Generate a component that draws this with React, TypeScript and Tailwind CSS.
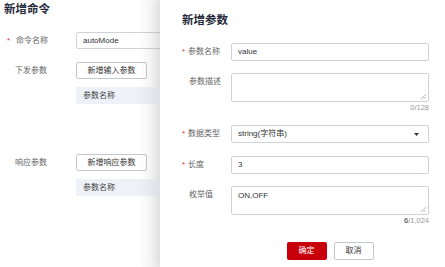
const font = { fontFamily: '"Liberation Sans", "Noto Sans CJK SC", sans-serif' };

function Resize() {
  return (
    <svg className="absolute right-[2px] bottom-[2px]" width="6" height="6" viewBox="0 0 6 6">
      <path d="M1 6 L6 1 M3.5 6 L6 3.5" stroke="#a8a8a8" strokeWidth="0.7" />
    </svg>
  );
}

function Label({ text, required }: { text: string; required?: boolean }) {
  return (
    <div className="flex w-[49px] shrink-0 items-center text-[8px] text-[#666]">
      {required ? <span className="w-[6px] shrink-0 text-[#e5333a]">*</span> : <span className="w-[7px]" />}
      <span>{text}</span>
    </div>
  );
}

function LeftRow({ label, required, children }: { label: string; required?: boolean; children: React.ReactNode }) {
  return (
    <div className="flex items-start">
      <div className="flex h-[17px] w-[69px] shrink-0 items-center text-[8px] text-[#666]">
        {required ? <span className="w-[9px] text-[#e5333a]">*</span> : <span className="w-[8px]" />}
        <span>{label}</span>
      </div>
      <div className="flex-1 min-w-0">{children}</div>
    </div>
  );
}

export default function App() {
  return (
    <div className="flex h-[267px] w-[445px] overflow-hidden bg-white" style={font}>
      <div className="relative w-[160px] shrink-0 overflow-hidden pt-[2px]">
        <h1 className="pl-[4px] text-[11.5px] font-bold leading-[15px] text-[#252b3a]">新增命令</h1>
        <div className="mt-[15px] pl-[7px]">
          <LeftRow label="命令名称" required>
            <div className="flex h-[17px] w-[120px] items-center rounded-[2px] border border-[#cfd2d9] pl-[6px] text-[8px] text-[#333]">
              autoMode
            </div>
          </LeftRow>
          <div className="mt-[13px]">
            <LeftRow label="下发参数">
              <div className="flex h-[17px] w-[71px] items-center justify-center rounded-[2px] border border-[#c4c7cc] text-[8px] text-[#333]">
                新增输入参数
              </div>
              <div className="mt-[8px] flex h-[17px] w-[120px] items-center bg-[#eef1f8] pl-[7px] text-[8px] text-[#444]">
                参数名称
              </div>
            </LeftRow>
          </div>
          <div className="mt-[50px]">
            <LeftRow label="响应参数">
              <div className="flex h-[17px] w-[71px] items-center justify-center rounded-[2px] border border-[#c4c7cc] text-[8px] text-[#333]">
                新增响应参数
              </div>
              <div className="mt-[8px] flex h-[17px] w-[120px] items-center bg-[#eef1f8] pl-[7px] text-[8px] text-[#444]">
                参数名称
              </div>
            </LeftRow>
          </div>
        </div>
        <div className="absolute right-0 top-0 h-full w-[22px] bg-gradient-to-r from-transparent to-black/[0.07]" />
      </div>

      <div className="flex-1 bg-white pl-[22px] pr-[16px] pt-[12px] shadow-[-4px_0_10px_rgba(0,0,0,0.08)]">
        <h2 className="text-[11.5px] font-bold leading-[16px] text-[#252b3a]">新增参数</h2>

        <div className="mt-[15px] flex items-center">
          <Label text="参数名称" required />
          <div className="flex h-[18px] w-[198px] items-center rounded-[2px] border border-[#cfd2d9] pl-[6px] text-[8px] text-[#333]">
            value
          </div>
        </div>

        <div className="mt-[12px] flex items-start">
          <div className="flex h-[18px] items-center">
            <Label text="参数描述" />
          </div>
          <div className="w-[198px]">
            <div className="relative h-[29px] rounded-[2px] border border-[#cfd2d9]">
              <Resize />
            </div>
            <div className="mt-[1px] text-right text-[7.5px] leading-[10px] text-[#999]">0/128</div>
          </div>
        </div>

        <div className="mt-[12px] flex items-center">
          <Label text="数据类型" required />
          <div className="flex h-[18px] w-[198px] items-center justify-between rounded-[2px] border border-[#cfd2d9] pl-[6px] pr-[9px] text-[8px] text-[#333]">
            <span>string(字符串)</span>
            <svg width="5" height="3" viewBox="0 0 5 3">
              <path d="M0 0 H5 L2.5 3 Z" fill="#333" />
            </svg>
          </div>
        </div>

        <div className="mt-[13px] flex items-center">
          <Label text="长度" required />
          <div className="flex h-[18px] w-[198px] items-center rounded-[2px] border border-[#cfd2d9] pl-[6px] text-[8px] text-[#333]">
            3
          </div>
        </div>

        <div className="mt-[12px] flex items-start">
          <div className="flex h-[18px] items-center">
            <Label text="枚举值" />
          </div>
          <div className="w-[198px]">
            <div className="relative h-[29px] rounded-[2px] border border-[#cfd2d9] pl-[6px] pt-[4px] text-[8px] leading-[10px] text-[#333]">
              ON,OFF
              <Resize />
            </div>
            <div className="mt-[1px] text-right text-[7.5px] leading-[10px] text-[#999]">
              <span className="text-[#333]">6</span>/1,024
            </div>
          </div>
        </div>

        <div className="mt-[16px] flex w-[247px] justify-center gap-[7px] pl-[49px]">
          <div className="flex h-[18px] w-[40px] items-center justify-center rounded-[2px] bg-[#c7000b] text-[8px] text-white">
            确定
          </div>
          <div className="flex h-[18px] w-[40px] items-center justify-center rounded-[2px] border border-[#c4c7cc] text-[8px] text-[#333]">
            取消
          </div>
        </div>
      </div>
    </div>
  );
}
